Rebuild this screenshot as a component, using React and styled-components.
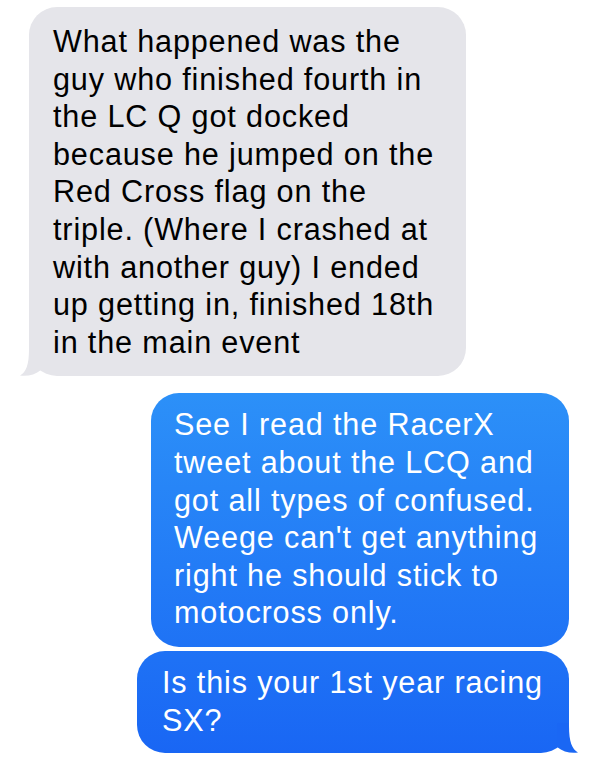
import React from "react";
import styled, { createGlobalStyle, css } from "styled-components";

const GlobalStyle = createGlobalStyle`
  html, body {
    margin: 0;
    padding: 0;
    background: #ffffff;
  }
  body {
    font-family: "Liberation Sans", Arial, Helvetica, sans-serif;
    -webkit-font-smoothing: antialiased;
  }
`;

const Thread = styled.div`
  width: 600px;
  display: flex;
  flex-direction: column;
  padding-top: 7px;
  box-sizing: border-box;
`;

const Row = styled.div`
  display: flex;
  justify-content: ${(p) => (p.$sent ? "flex-end" : "flex-start")};
  padding-left: ${(p) => (p.$sent ? 0 : 29)}px;
  padding-right: ${(p) => (p.$sent ? 31 : 0)}px;
  margin-top: ${(p) => p.$gap || 0}px;
`;

const Bubble = styled.div`
  position: relative;
  box-sizing: border-box;
  width: ${(p) => p.$width}px;
  padding: ${(p) => p.$pad};
  border-radius: 28px;
  font-size: 30.6px;
  line-height: 37.6px;
  letter-spacing: 0.85px;
  white-space: nowrap;
  ${(p) =>
    p.$sent
      ? css`
          color: #ffffff;
          background: linear-gradient(180deg, #2c90f8 394px, #1966f4 755px) fixed;
        `
      : css`
          color: #000000;
          background: #e5e5ea;
        `}
`;

const TailSvg = styled.svg`
  position: absolute;
  bottom: 0;
  width: 30px;
  height: 30px;
  ${(p) =>
    p.$side === "right"
      ? css`
          right: -10px;
          transform: scaleX(-1);
        `
      : css`
          left: -10px;
        `}
`;

function Tail({ side, color }) {
  return (
    <TailSvg $side={side} viewBox="0 0 30 30" aria-hidden="true">
      <path
        d="M10,0 L10,3 C10,19 7,26 1,29.5 C8,30.6 16,29 22,24 L22,0 Z"
        fill={color}
      />
    </TailSvg>
  );
}

const Line = styled.span`
  display: block;
`;

const messages = [
  {
    sent: false,
    width: 437,
    pad: "16px 20px 15px 24px",
    gap: 0,
    tail: "left",
    tailColor: "#e5e5ea",
    lines: [
      "What happened was the",
      "guy who finished fourth in",
      "the LC Q got docked",
      "because he jumped on the",
      "Red Cross flag on the",
      "triple. (Where I crashed at",
      "with another guy) I ended",
      "up getting in, finished 18th",
      "in the main event",
    ],
  },
  {
    sent: true,
    width: 418,
    pad: "13px 20px 15px 23px",
    gap: 17,
    lines: [
      "See I read the RacerX",
      "tweet about the LCQ and",
      "got all types of confused.",
      "Weege can't get anything",
      "right he should stick to",
      "motocross only.",
    ],
  },
  {
    sent: true,
    width: 432,
    pad: "13px 20px 14px 25px",
    gap: 4,
    tail: "right",
    tailColor: "#1a67f4",
    lines: ["Is this your 1st year racing", "SX?"],
  },
];

export default function App() {
  return (
    <>
      <GlobalStyle />
      <Thread>
        {messages.map((m, i) => (
          <Row key={i} $sent={m.sent} $gap={m.gap}>
            <Bubble $sent={m.sent} $width={m.width} $pad={m.pad}>
              {m.lines.map((l, j) => (
                <Line key={j}>{l}</Line>
              ))}
              {m.tail && <Tail side={m.tail} color={m.tailColor} />}
            </Bubble>
          </Row>
        ))}
      </Thread>
    </>
  );
}
